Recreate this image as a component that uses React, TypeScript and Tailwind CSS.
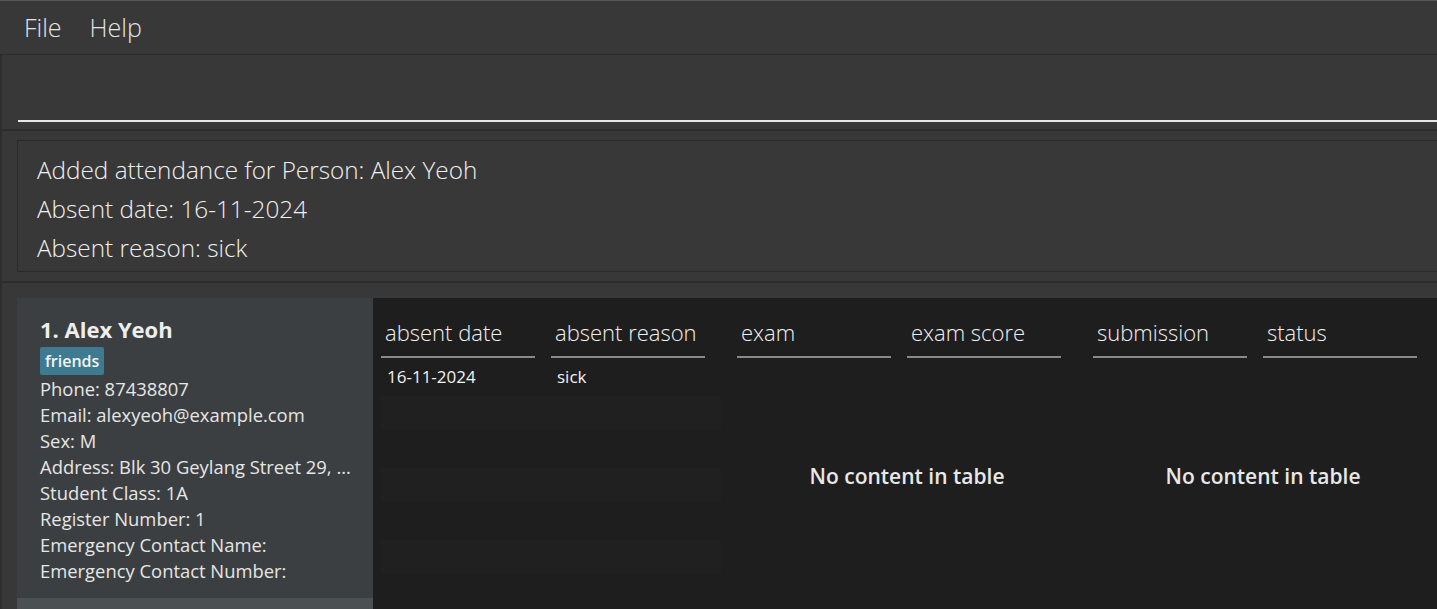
import React from 'react';

const font = { fontFamily: '"Open Sans", "Noto Sans", sans-serif' };

const details = [
  'Phone: 87438807',
  'Email: alexyeoh@example.com',
  'Sex: M',
  'Address: Blk 30 Geylang Street 29, ...',
  'Student Class: 1A',
  'Register Number: 1',
  'Emergency Contact Name:',
  'Emergency Contact Number:',
];

function TableGroup({ cols, rows }: { cols: string[]; rows: string[][] }) {
  return (
    <div className="w-[356px] shrink-0 flex flex-col">
      <div className="flex gap-4 pr-[32px]">
        {cols.map((c) => (
          <div key={c} className="w-[154px] border-b-2 border-[#8a8a8a] pt-[19px] pb-[9px] pl-1 text-[22px] leading-[30px] font-light text-[#f2f2f2]">
            {c}
          </div>
        ))}
      </div>
      {rows.length > 0 ? (
        <div className="flex flex-col pr-[16px]">
          {rows.map((r, i) => (
            <div key={i} className="flex gap-4 h-[38px] items-center">
              {r.map((v, j) => (
                <div key={j} className="w-[154px] pl-[6px] text-[17px] text-[#f2f2f2]">{v}</div>
              ))}
            </div>
          ))}
          {[0, 1, 2, 3, 4, 5].map((i) => (
            <div key={'e' + i} className={i % 2 === 0 ? 'h-[33px] bg-[#202020]' : 'h-[39px]'} />
          ))}
        </div>
      ) : (
        <div className="pt-[103px] pr-[16px] text-center text-[21px] font-semibold text-[#e8e8e8]">
          No content in table
        </div>
      )}
    </div>
  );
}

export default function App() {
  return (
    <div style={font} className="w-[1437px] h-[609px] overflow-hidden bg-[#383838] flex flex-col border-t border-[#555555]">
      <div className="h-[54px] shrink-0 flex items-center gap-[28px] px-6 text-[25px] font-light text-[#e4e4e4] border-b border-[#2b2b2b]">
        <span>File</span>
        <span>Help</span>
      </div>

      <div className="h-[76px] shrink-0 pl-[16px] pb-[7px] flex items-end border-l-2 border-[#2e2e2e] border-b-2 border-b-[#2d2d2d]">
        <div className="w-full h-[2px] bg-[#e6e6e6]" />
      </div>

      <div className="shrink-0 pl-[15px] pt-[9px] pb-[9px] border-l-2 border-[#2e2e2e] border-b-2 border-b-[#2d2d2d]">
        <div className="border border-[#2a2a2a] border-r-0 pl-[19px] pt-[9px] pb-[4px] text-[24.3px] leading-[39px] font-light text-[#f0f0f0]">
          <div>Added attendance for Person: Alex Yeoh</div>
          <div>Absent date: 16-11-2024</div>
          <div>Absent reason: sick</div>
        </div>
      </div>

      <div className="flex-1 flex pl-[15px] pt-[15px] border-l-2 border-[#2e2e2e]">
        <div className="w-[356px] shrink-0 flex flex-col">
          <div className="h-[300px] shrink-0 bg-[#3c3f41] pl-[23px] pt-[17px] text-[#e6e6e6]">
            <div className="text-[22px] leading-[28px] font-bold text-[#eeeeee]">1. Alex Yeoh</div>
            <div className="mt-[4px] mb-[1px] inline-block rounded-[2px] bg-[#3e7b91] px-[5px] text-[16px] leading-[28px] font-semibold text-[#f4f4f4]">
              friends
            </div>
            {details.map((d) => (
              <div key={d} className="text-[18.4px] leading-[26px] whitespace-nowrap">{d}</div>
            ))}
          </div>
          <div className="flex-1 bg-[#4b5052]" />
        </div>
        <div className="flex-1 bg-[#1e1e1e] pl-[8px] flex">
          <TableGroup cols={['absent date', 'absent reason']} rows={[['16-11-2024', 'sick']]} />
          <TableGroup cols={['exam', 'exam score']} rows={[]} />
          <TableGroup cols={['submission', 'status']} rows={[]} />
        </div>
      </div>
    </div>
  );
}
